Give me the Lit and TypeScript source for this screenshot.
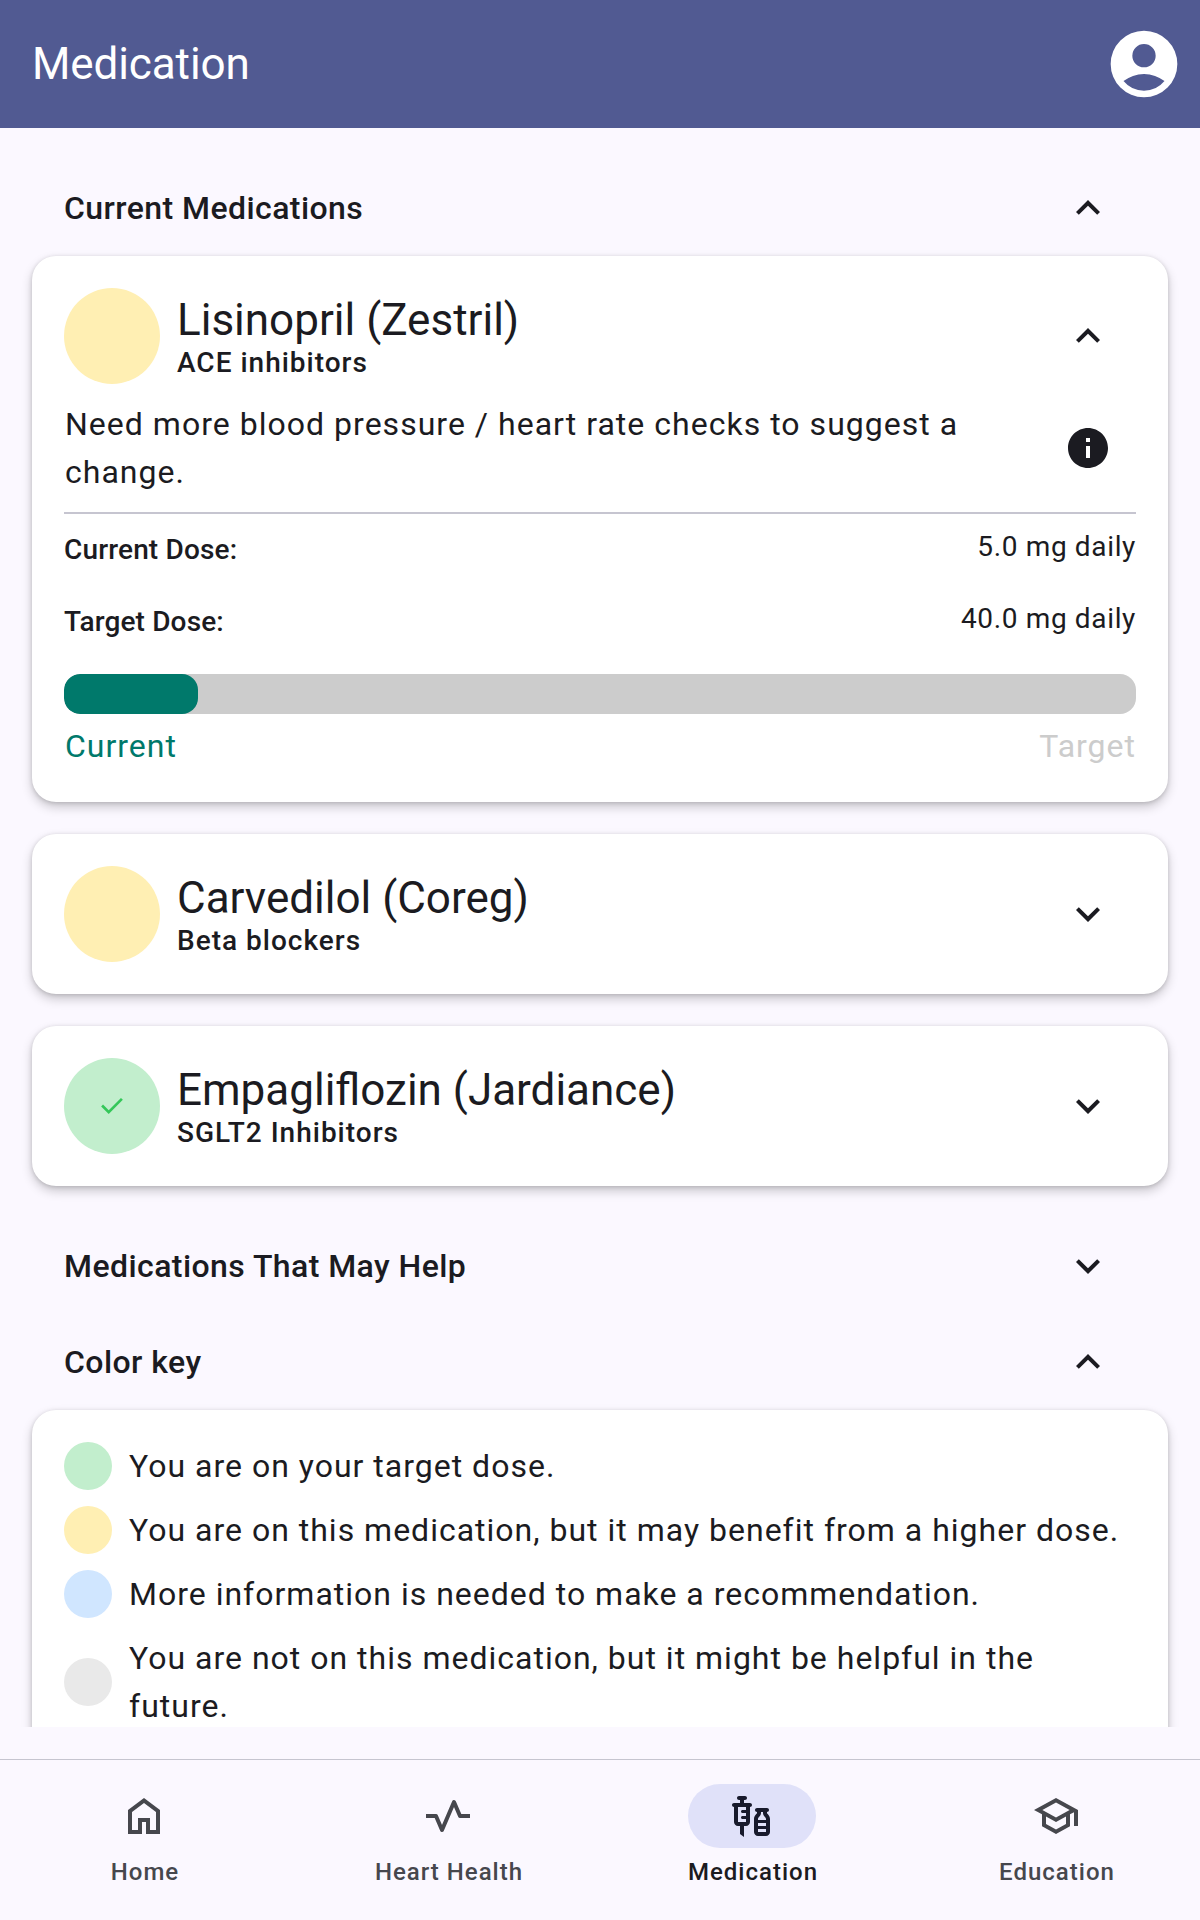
import { LitElement, html, css, svg } from "lit";
import { customElement, property } from "lit/decorators.js";
import { classMap } from "lit/directives/class-map.js";

const ICONS = {
  account: svg`<path fill-rule="evenodd" d="M12 2a10 10 0 1 0 0 20 10 10 0 0 0 0-20zM12 6a3.5 3.5 0 1 1 0 7 3.5 3.5 0 0 1 0-7zM5.85 17.1q1.275-.975 2.85-1.537T12 15t3.3.563 2.85 1.537A8 8 0 0 1 12 20a8 8 0 0 1-6.15-2.9z"/>`,
  up: svg`<path d="M12 8l-6 6 1.41 1.41L12 10.83l4.59 4.58L18 14z"/>`,
  down: svg`<path d="M16.59 8.59 12 13.17 7.41 8.59 6 10l6 6 6-6z"/>`,
  info: svg`<path d="M12 2C6.48 2 2 6.48 2 12s4.48 10 10 10 10-4.48 10-10S17.52 2 12 2zm1 15h-2v-6h2v6zm0-8h-2V7h2v2z"/>`,
  check: svg`<path d="M9.55 18 3.85 12.3l1.425-1.425L9.55 15.15l9.175-9.175L20.15 7.4z"/>`,
  home: svg`<path d="M6 19h3v-6h6v6h3v-9l-6-4.5L6 10v9zm-2 2V9l8-6 8 6v12h-7v-6h-2v6H4z"/>`,
  vitals: svg`<path fill="none" stroke="currentColor" stroke-width="2" stroke-linejoin="round" d="M1 12h5"/><path fill="none" stroke="currentColor" stroke-width="2" stroke-linejoin="round" d="M5.3 12H6l3 7 6-14 3 7h5"/>`,
  vaccines: svg`<path d="M11 5.5H8V4h.5c.55 0 1-.45 1-1s-.45-1-1-1h-3c-.55 0-1 .45-1 1s.45 1 1 1H6v1.5H3c-.55 0-1 .45-1 1s.45 1 1 1V15c0 1.1.9 2 2 2h1v4l2 1.5V17h1c1.1 0 2-.9 2-2V7.5c.55 0 1-.45 1-1s-.45-1-1-1zM9 9H7.25c-.41 0-.75.34-.75.75s.34.75.75.75H9V12H7.25c-.41 0-.75.34-.75.75s.34.75.75.75H9V15H5V7.5h4V9zm10.5 1.5V10c.55 0 1-.45 1-1s-.45-1-1-1h-5c-.55 0-1 .45-1 1s.45 1 1 1v.5c0 .5-1.5 1.16-1.5 3V20c0 1.1.9 2 2 2h4c1.1 0 2-.9 2-2v-6.5c0-1.84-1.5-2.5-1.5-3zm-3 0V10h1v.5c0 1.6 1.5 2 1.5 3V14h-4v-.5c0-1 1.5-1.4 1.5-3zm2.5 5V17h-4v-1.5h4zM15 20v-1.5h4V20h-4z"/>`,
  school: svg`<path d="M12 3 1 9l4 2.18v6L12 21l7-3.82v-6l2-1.09V17h2V9L12 3zm6.82 6L12 12.72 5.18 9 12 5.28 18.82 9zM17 15.99l-5 2.73-5-2.73v-3.72L12 15l5-2.73v3.72z"/>`,
};
type IconName = keyof typeof ICONS;

@customElement("md-icon")
class MdIcon extends LitElement {
  @property() name: IconName = "up";
  static styles = css`
    :host { display: block; width: 48px; height: 48px; }
    svg { display: block; width: 100%; height: 100%; fill: currentColor; }
  `;
  render() {
    return html`<svg viewBox="0 0 24 24" aria-hidden="true">${ICONS[this.name]}</svg>`;
  }
}

@customElement("section-header")
class SectionHeader extends LitElement {
  @property() label = "";
  @property({ type: Boolean }) open = false;
  static styles = css`
    :host { display: flex; align-items: center; justify-content: space-between; height: 96px; padding: 0 32px; }
    .label { font-size: 32px; line-height: 48px; font-weight: 500; letter-spacing: 0.43px; }
    .toggle { display: grid; place-items: center; width: 96px; height: 96px; }
  `;
  render() {
    return html`<span class="label">${this.label}</span>
      <span class="toggle"><md-icon .name=${this.open ? "up" : "down"}></md-icon></span>`;
  }
}

const cardSurface = css`
  :host {
    padding: 32px; background: #fff; border-radius: 24px;
    box-shadow: 0 5px 11px rgba(0, 0, 0, 0.2), 0 1px 4px rgba(0, 0, 0, 0.15);
  }
`;

interface Medication {
  name: string;
  kind: string;
  status: "green" | "yellow";
  details?: { advice: string; current: number; target: number };
}

const MEDICATIONS: Medication[] = [
  {
    name: "Lisinopril (Zestril)",
    kind: "ACE inhibitors",
    status: "yellow",
    details: {
      advice: "Need more blood pressure / heart rate checks to suggest a change.",
      current: 5,
      target: 40,
    },
  },
  { name: "Carvedilol (Coreg)", kind: "Beta blockers", status: "yellow" },
  { name: "Empagliflozin (Jardiance)", kind: "SGLT2 Inhibitors", status: "green" },
];

@customElement("medication-card")
class MedicationCard extends LitElement {
  @property({ attribute: false }) med!: Medication;
  static styles = [cardSurface, css`
    :host { display: block; }
    .head { display: flex; align-items: center; height: 96px; gap: 17px; }
    .dot { display: grid; place-items: center; width: 96px; height: 96px; border-radius: 50%; color: #34c759; }
    .dot md-icon { width: 32px; height: 32px; }
    .green { background: #c2eecd; }
    .yellow { background: #ffefb3; }
    .names { flex: 1; }
    .name { font-size: 44px; line-height: 56px; }
    .kind { font-size: 28px; line-height: 30px; padding-bottom: 2px; font-weight: 500; letter-spacing: 1px; }
    .toggle { display: grid; place-items: center; width: 96px; height: 96px; }
    .advice { display: flex; align-items: center; padding: 16px 0; border-bottom: 2px solid #c6c5d0; }
    .advice p { flex: 1; margin: 0; padding-left: 1px; font-size: 32px; line-height: 48px; letter-spacing: 1.02px; }
    .dose { display: flex; align-items: center; justify-content: space-between; height: 72px; font-size: 28px; line-height: 40px; }
    .dose .label { font-weight: 500; letter-spacing: 0.15px; }
    .dose .value { letter-spacing: 0.65px; padding-bottom: 6px; }
    .bar { height: 40px; margin-top: 16px; border-radius: 16px; background: #ccc; overflow: hidden; }
    .fill { height: 100%; border-radius: 16px; background: #00796b; }
    .legend {
      display: flex; justify-content: space-between; margin-top: 8px; padding-left: 1px;
      font-size: 32px; line-height: 48px; letter-spacing: 1px;
    }
    .current { color: #00796b; }
    .target { color: #ccc; }
  `];
  render() {
    const { name, kind, status, details } = this.med;
    return html`
      <div class="head">
        <div class=${classMap({ dot: true, [status]: true })}>
          ${status === "green" ? html`<md-icon name="check"></md-icon>` : null}
        </div>
        <div class="names">
          <div class="name">${name}</div>
          <div class="kind">${kind}</div>
        </div>
        <span class="toggle"><md-icon .name=${details ? "up" : "down"}></md-icon></span>
      </div>
      ${details
        ? html`
            <div class="advice">
              <p>${details.advice}</p>
              <span class="toggle"><md-icon name="info"></md-icon></span>
            </div>
            <div class="dose">
              <span class="label">Current Dose:</span>
              <span class="value">${details.current.toFixed(1)} mg daily</span>
            </div>
            <div class="dose">
              <span class="label">Target Dose:</span>
              <span class="value">${details.target.toFixed(1)} mg daily</span>
            </div>
            <div class="bar">
              <div class="fill" style="width:${(details.current / details.target) * 100}%"></div>
            </div>
            <div class="legend"><span class="current">Current</span><span class="target">Target</span></div>
          `
        : null}
    `;
  }
}

const KEY = [
  { tone: "green", text: "You are on your target dose." },
  { tone: "yellow", text: "You are on this medication, but it may benefit from a higher dose." },
  { tone: "blue", text: "More information is needed to make a recommendation." },
  { tone: "gray", text: "You are not on this medication, but it might be helpful in the future." },
];

@customElement("color-key")
class ColorKey extends LitElement {
  static styles = [cardSurface, css`
    :host { display: flex; flex-direction: column; gap: 16px; }
    .row { display: flex; align-items: center; gap: 17px; font-size: 32px; line-height: 48px; letter-spacing: 1px; }
    .text { flex: 1; }
    .dot { width: 48px; height: 48px; border-radius: 50%; }
    .green { background: #c2eecd; }
    .yellow { background: #ffefb3; }
    .blue { background: #d0e6ff; }
    .gray { background: #e9e9e9; }
  `];
  render() {
    return KEY.map(
      (k) => html`<div class="row">
        <span class=${classMap({ dot: true, [k.tone]: true })}></span><span class="text">${k.text}</span>
      </div>`
    );
  }
}

const TABS: { label: string; icon: IconName }[] = [
  { label: "Home", icon: "home" },
  { label: "Heart Health", icon: "vitals" },
  { label: "Medication", icon: "vaccines" },
  { label: "Education", icon: "school" },
];

@customElement("app-root")
class AppRoot extends LitElement {
  static styles = css`
    :host {
      display: flex; flex-direction: column; width: 1200px; height: 1920px; overflow: hidden;
      background: #fbf8ff; color: #1b1b21; font-family: Roboto, sans-serif;
    }
    .top {
      display: flex; align-items: center; justify-content: space-between; flex: none; box-sizing: border-box;
      height: 128px; padding: 0 16px 0 32px; background: #515a92; color: #fff;
    }
    .title { margin: 0; font-size: 44px; line-height: 56px; font-weight: 400; letter-spacing: -0.1px; }
    .top md-icon { width: 80px; height: 80px; }
    .content { flex: 1; min-height: 0; overflow: hidden; padding: 32px 32px 0; }
    .cards { display: flex; flex-direction: column; gap: 32px; margin-bottom: 32px; }
    .nav {
      display: flex; gap: 16px; flex: none; box-sizing: border-box; height: 161px; margin-top: 32px;
      padding-top: 24px; border-top: 1px solid #c6c5d0; color: #46474d;
    }
    .tab { flex: 1; display: flex; flex-direction: column; align-items: center; gap: 8px; }
    .pill { display: grid; place-items: center; width: 128px; height: 64px; border-radius: 32px; }
    .tab span { padding-left: 2px; font-size: 24px; line-height: 32px; font-weight: 500; letter-spacing: 1px; }
    .active { color: #1b1b21; }
    .active .pill { background: #e0e1f9; color: #181a2c; }
  `;
  render() {
    return html`
      <header class="top">
        <h1 class="title">Medication</h1>
        <md-icon name="account"></md-icon>
      </header>
      <main class="content">
        <section-header label="Current Medications" open></section-header>
        <div class="cards">${MEDICATIONS.map((m) => html`<medication-card .med=${m}></medication-card>`)}</div>
        <section-header label="Medications That May Help"></section-header>
        <section-header label="Color key" open></section-header>
        <color-key></color-key>
      </main>
      <nav class="nav">
        ${TABS.map(
          (t) => html`<div class=${classMap({ tab: true, active: t.label === "Medication" })}>
            <div class="pill"><md-icon .name=${t.icon}></md-icon></div>
            <span>${t.label}</span>
          </div>`
        )}
      </nav>
    `;
  }
}
